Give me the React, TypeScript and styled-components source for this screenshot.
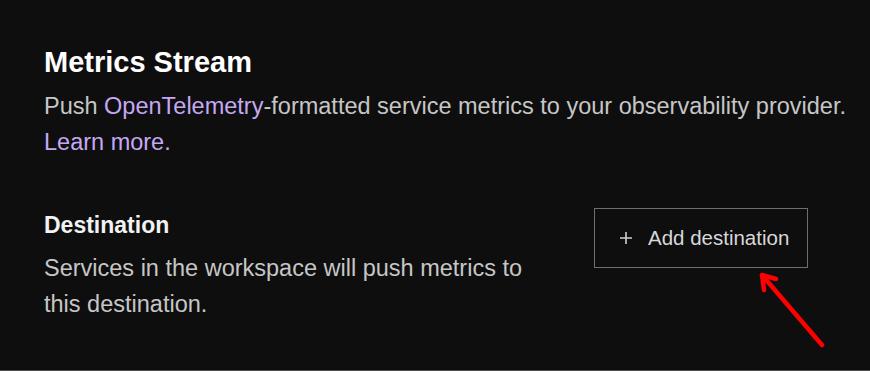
import { Fragment } from "react";
import styled, { createGlobalStyle } from "styled-components";

const GlobalStyle = createGlobalStyle`
  html, body {
    margin: 0;
    padding: 0;
    background: #0e0e0e;
  }
  * {
    box-sizing: border-box;
  }
`;

const Page = styled.div`
  position: relative;
  height: 371px;
  background: #0e0e0e;
  border-bottom: 1px solid #4d4d4d;
  padding: 44px 12px 0 44px;
  font-family: "Liberation Sans", Arial, sans-serif;
  color: #c6c6c6;
`;

const Title = styled.h1`
  margin: 0 0 8px;
  font-size: 29px;
  line-height: 36px;
  font-weight: 700;
  color: #ffffff;
`;

const Lead = styled.p`
  margin: 0;
  font-size: 23.5px;
  line-height: 36px;
  color: #c6c6c6;
`;

const Link = styled.a`
  color: #c5a8f3;
  text-decoration: none;
`;

const Row = styled.div`
  display: flex;
  justify-content: space-between;
  align-items: flex-start;
  margin: 50px 50px 0 0;
`;

const Info = styled.div`
  max-width: 505px;
`;

const SubTitle = styled.h2`
  margin: 0 0 10px;
  font-size: 23px;
  line-height: 30px;
  font-weight: 700;
  color: #f2f2f2;
`;

const AddButton = styled.button`
  display: flex;
  align-items: center;
  gap: 15px;
  width: 214px;
  height: 60px;
  margin-top: -2px;
  padding: 0 0 0 24px;
  background: transparent;
  border: 1px solid #6e6e6e;
  color: #d8d8d8;
  font-family: "Liberation Sans", Arial, sans-serif;
  font-size: 20.5px;
  cursor: pointer;
`;

const Arrow = styled.svg`
  position: absolute;
  left: 751px;
  top: 265px;
  overflow: visible;
`;

function PlusIcon() {
  return (
    <svg width="14" height="14" viewBox="0 0 14 14">
      <path d="M7 1v12M1 7h12" stroke="#cfcfcf" strokeWidth="1.6" />
    </svg>
  );
}

export default function App() {
  return (
    <Fragment>
      <GlobalStyle />
      <Page>
        <Title>Metrics Stream</Title>
        <Lead>
          Push <Link href="#">OpenTelemetry</Link>-formatted service metrics to your observability provider.{" "}
          <Link href="#">Learn more.</Link>
        </Lead>
        <Row>
          <Info>
            <SubTitle>Destination</SubTitle>
            <Lead>Services in the workspace will push metrics to this destination.</Lead>
          </Info>
          <AddButton type="button">
            <PlusIcon />
            Add destination
          </AddButton>
        </Row>
        <Arrow width="80" height="90" viewBox="0 0 80 90">
          <path
            d="M71 80L11 10M11 10l2 15M11 10l14 4"
            fill="none"
            stroke="#ff0000"
            strokeWidth="4.5"
            strokeLinecap="round"
            strokeLinejoin="round"
          />
        </Arrow>
      </Page>
    </Fragment>
  );
}
